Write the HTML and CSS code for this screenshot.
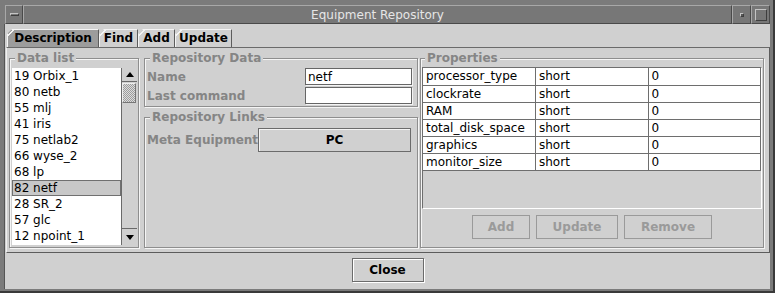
FILE: index.html
```html
<!DOCTYPE html>
<html lang="en">
<head>
    <meta charset="UTF-8">
    <title>Equipment Repository</title>
    <link rel="stylesheet" href="styles.css">
</head>
<body>
    <div class="window">
        <!-- Window manager title bar -->
        <div class="titlebar">
            <div class="wm-btn menu-btn"><span class="menu-bar"></span></div>
            <div class="title">Equipment Repository</div>
            <div class="wm-btn min-btn"><span class="min-dot"></span></div>
            <div class="wm-btn max-btn"><span class="max-box"></span></div>
        </div>

        <div class="client">
            <div class="tabs">
                <div class="tab active tab-desc">Description</div>
                <div class="tab tab-find">Find</div>
                <div class="tab tab-add">Add</div>
                <div class="tab tab-update">Update</div>
            </div>

            <div class="tab-panel">
                <fieldset class="group data-list">
                    <legend>Data list</legend>
                    <div class="listbox">
                        <ul class="items">
                            <li>19 Orbix_1</li>
                            <li>80 netb</li>
                            <li>55 mlj</li>
                            <li>41 iris</li>
                            <li>75 netlab2</li>
                            <li>66 wyse_2</li>
                            <li>68 lp</li>
                            <li class="selected">82 netf</li>
                            <li>28 SR_2</li>
                            <li>57 glc</li>
                            <li>12 npoint_1</li>
                        </ul>
                        <div class="scrollbar">
                            <div class="arrow-btn up"><span class="tri-up"></span></div>
                            <div class="track"><div class="thumb"></div></div>
                            <div class="arrow-btn down"><span class="tri-down"></span></div>
                        </div>
                    </div>
                </fieldset>

                <div class="middle">
                    <fieldset class="group repo-data">
                        <legend>Repository Data</legend>
                        <div class="field-row">
                            <label class="field-label" for="name">Name</label>
                            <input class="text-input" id="name" type="text" value="netf">
                        </div>
                        <div class="field-row">
                            <label class="field-label" for="lastcmd">Last command</label>
                            <input class="text-input" id="lastcmd" type="text" value="">
                        </div>
                    </fieldset>

                    <fieldset class="group repo-links">
                        <legend>Repository Links</legend>
                        <div class="link-row">
                            <span class="field-label">Meta Equipment</span>
                            <button class="btn pc-btn">PC</button>
                        </div>
                    </fieldset>
                </div>

                <fieldset class="group properties">
                    <legend>Properties</legend>
                    <div class="table-view">
                        <table class="prop-table">
                            <tr><td>processor_type</td><td>short</td><td>0</td></tr>
                            <tr><td>clockrate</td><td>short</td><td>0</td></tr>
                            <tr><td>RAM</td><td>short</td><td>0</td></tr>
                            <tr><td>total_disk_space</td><td>short</td><td>0</td></tr>
                            <tr><td>graphics</td><td>short</td><td>0</td></tr>
                            <tr><td>monitor_size</td><td>short</td><td>0</td></tr>
                        </table>
                    </div>
                    <div class="prop-buttons">
                        <button class="btn disabled btn-add">Add</button>
                        <button class="btn disabled btn-update">Update</button>
                        <button class="btn disabled btn-remove">Remove</button>
                    </div>
                </fieldset>
            </div>

            <div class="footer">
                <button class="btn close-btn">Close</button>
            </div>
        </div>
    </div>
</body>
</html>
```

FILE: styles.css
```css
/* Motif-style dialog */
* {
    box-sizing: border-box;
}

body {
    margin: 0;
    background-color: #3c3c3c;
    font-family: "DejaVu Sans", sans-serif;
    font-size: 12px;
    color: #000;
}

.window {
    width: 775px;
    height: 293px;
    background-color: #7b7b7b;
    padding: 5px 3px 2px 4px;
    border-right: 2px solid #3a3a3a;
    border-bottom: 2px solid #3a3a3a;
    display: flex;
    flex-direction: column;
}

/* Title bar */
.titlebar {
    height: 19px;
    margin-left: 1px;
    display: flex;
}

.wm-btn,
.title {
    background-color: #777;
    border: 1px solid;
    border-color: #a8a8a8 #4a4a4a #4a4a4a #a8a8a8;
    display: flex;
    align-items: center;
    justify-content: center;
}

.menu-btn {
    width: 18px;
}

.menu-bar {
    width: 9px;
    height: 3px;
    border: 1px solid;
    border-color: #c4c4c4 #3e3e3e #3e3e3e #c4c4c4;
}

.title {
    flex: 1;
    color: #e6e6e6;
    font-size: 12px;
}

.min-btn,
.max-btn {
    width: 19px;
}

.min-dot {
    width: 4px;
    height: 4px;
    background-color: #555;
    border: 1px solid;
    border-color: #c4c4c4 #3e3e3e #3e3e3e #c4c4c4;
}

.max-box {
    width: 12px;
    height: 12px;
    border: 1px solid;
    border-color: #c4c4c4 #3e3e3e #3e3e3e #c4c4c4;
}

/* Client area */
.client {
    flex: 1;
    background-color: #d0d0d0;
    border-left: 1px solid #555;
    padding-top: 5px;
    display: flex;
    flex-direction: column;
}

/* Tabs */
.tabs {
    height: 18px;
    margin-left: 2px;
    display: flex;
}

.tab {
    height: 18px;
    font-weight: bold;
    text-align: center;
    line-height: 17px;
    background-color: #d0d0d0;
    border-top: 1px solid #f4f4f4;
    border-left: 1px solid #f4f4f4;
    border-right: 1px solid #5c5c5c;
    clip-path: polygon(5px 0, 100% 0, 100% 100%, 0 100%, 0 5px);
    background-image: linear-gradient(135deg, transparent 3px, #f4f4f4 3px, #f4f4f4 4.3px, transparent 4.3px);
}

.tab.active {
    background-color: #9c9c9c;
}

.tab-desc { width: 92px; }
.tab-find { width: 39px; }
.tab-add { width: 37px; }
.tab-update { width: 57px; }

.tab-panel {
    height: 206px;
    margin-left: 1px;
    border: 1px solid;
    border-color: #6a6a6a #5c5c5c #5c5c5c #f0f0f0;
    padding: 3px 5px 4px 2px;
    display: flex;
}

/* Etched group boxes */
.group {
    margin: 0;
    border: 1px solid #8e8e8e;
    box-shadow: inset 1px 1px 0 #f5f5f5, 1px 1px 0 #f5f5f5;
    min-width: 0;
}

.group legend {
    font-weight: bold;
    color: #858585;
    line-height: 14px;
    padding: 0 2px;
    margin-left: 3px;
    background-color: #d0d0d0;
}

.data-list {
    width: 130px;
    flex: none;
    padding: 3px 1px 2px 2px;
}

.listbox {
    height: 177px;
    display: flex;
    background-color: #fff;
}

.items {
    list-style: none;
    margin: 0;
    padding: 0;
    flex: 1;
}

.items li {
    height: 16px;
    line-height: 16px;
    padding-left: 2px;
    white-space: nowrap;
}

.items li.selected {
    background-color: #c8c8c8;
    border: 1px solid #707070;
    padding-left: 1px;
    line-height: 14px;
}

.scrollbar {
    width: 16px;
    background-color: #d0d0d0;
    border-left: 1px solid #6a6a6a;
    display: flex;
    flex-direction: column;
}

.arrow-btn {
    height: 14px;
    display: flex;
    align-items: center;
    justify-content: center;
}

.arrow-btn.up {
    border-bottom: 1px solid #6a6a6a;
}

.arrow-btn.down {
    height: 17px;
    border-top: 1px solid #6a6a6a;
}

.tri-up {
    border-left: 4px solid transparent;
    border-right: 4px solid transparent;
    border-bottom: 5px solid #000;
}

.tri-down {
    border-left: 4px solid transparent;
    border-right: 4px solid transparent;
    border-top: 5px solid #000;
}

.track {
    flex: 1;
    padding-top: 1px;
}

.thumb {
    height: 20px;
    margin-right: 1px;
    border: 1px solid;
    border-color: #eee #777 #777 #eee;
    background: repeating-conic-gradient(#9c9c9c 0 25%, #dcdcdc 0 50%) 0 0 / 2px 2px;
}

/* Middle column */
.middle {
    width: 274px;
    flex: none;
    margin-left: 5px;
    display: flex;
    flex-direction: column;
}

.field-label {
    font-weight: bold;
    color: #858585;
    white-space: nowrap;
}

.repo-data {
    padding: 3px 5px 2px 2px;
}

.field-row {
    height: 17px;
    display: flex;
    justify-content: space-between;
    align-items: center;
}

.field-row + .field-row {
    margin-top: 2px;
}

.text-input {
    width: 107px;
    height: 17px;
    margin: 0;
    padding: 0 2px;
    font-family: "DejaVu Sans", sans-serif;
    font-size: 12px;
    background-color: #fff;
    border: 1px solid #666;
    box-shadow: 1px 1px 0 #f4f4f4;
    outline: none;
}

.repo-links {
    flex: 1;
    margin-top: 3px;
    padding: 4px 5px 2px 2px;
}

.link-row {
    display: flex;
    align-items: center;
    justify-content: space-between;
}

/* Buttons */
.btn {
    margin: 0;
    padding: 0;
    height: 24px;
    font-family: "DejaVu Sans", sans-serif;
    font-size: 12px;
    font-weight: bold;
    color: #000;
    background-color: #d0d0d0;
    border: 1px solid #6b6b6b;
    box-shadow: inset 1px 1px 0 #f4f4f4;
}

.pc-btn {
    width: 154px;
    margin-right: 1px;
}

.btn.disabled {
    color: #9a9a9a;
    border-color: #9a9a9a;
    box-shadow: none;
}

.btn-add { width: 58px; }
.btn-update { width: 82px; }
.btn-remove { width: 88px; }

/* Properties */
.properties {
    flex: 1;
    margin-left: 2px;
    padding: 2px 1px 2px 1px;
}

.table-view {
    height: 142px;
    border: 1px solid;
    border-color: #6e6e6e #fff #fff #6e6e6e;
}

.prop-table {
    width: 100%;
    border-collapse: collapse;
    background-color: #fff;
}

.prop-table td {
    height: 17px;
    padding: 0 0 0 3px;
    border-right: 1px solid #6e6e6e;
    border-bottom: 1px solid #6e6e6e;
    line-height: 16px;
    width: 33.3%;
}

.prop-buttons {
    margin-top: 6px;
    display: flex;
    justify-content: center;
    gap: 6px;
}

/* Footer */
.footer {
    flex: 1;
    padding-top: 5px;
    display: flex;
    justify-content: center;
    align-items: flex-start;
}

.close-btn {
    width: 72px;
    box-shadow: inset 1px 1px 0 #fff, 1px 1px 0 #fff;
}
```
